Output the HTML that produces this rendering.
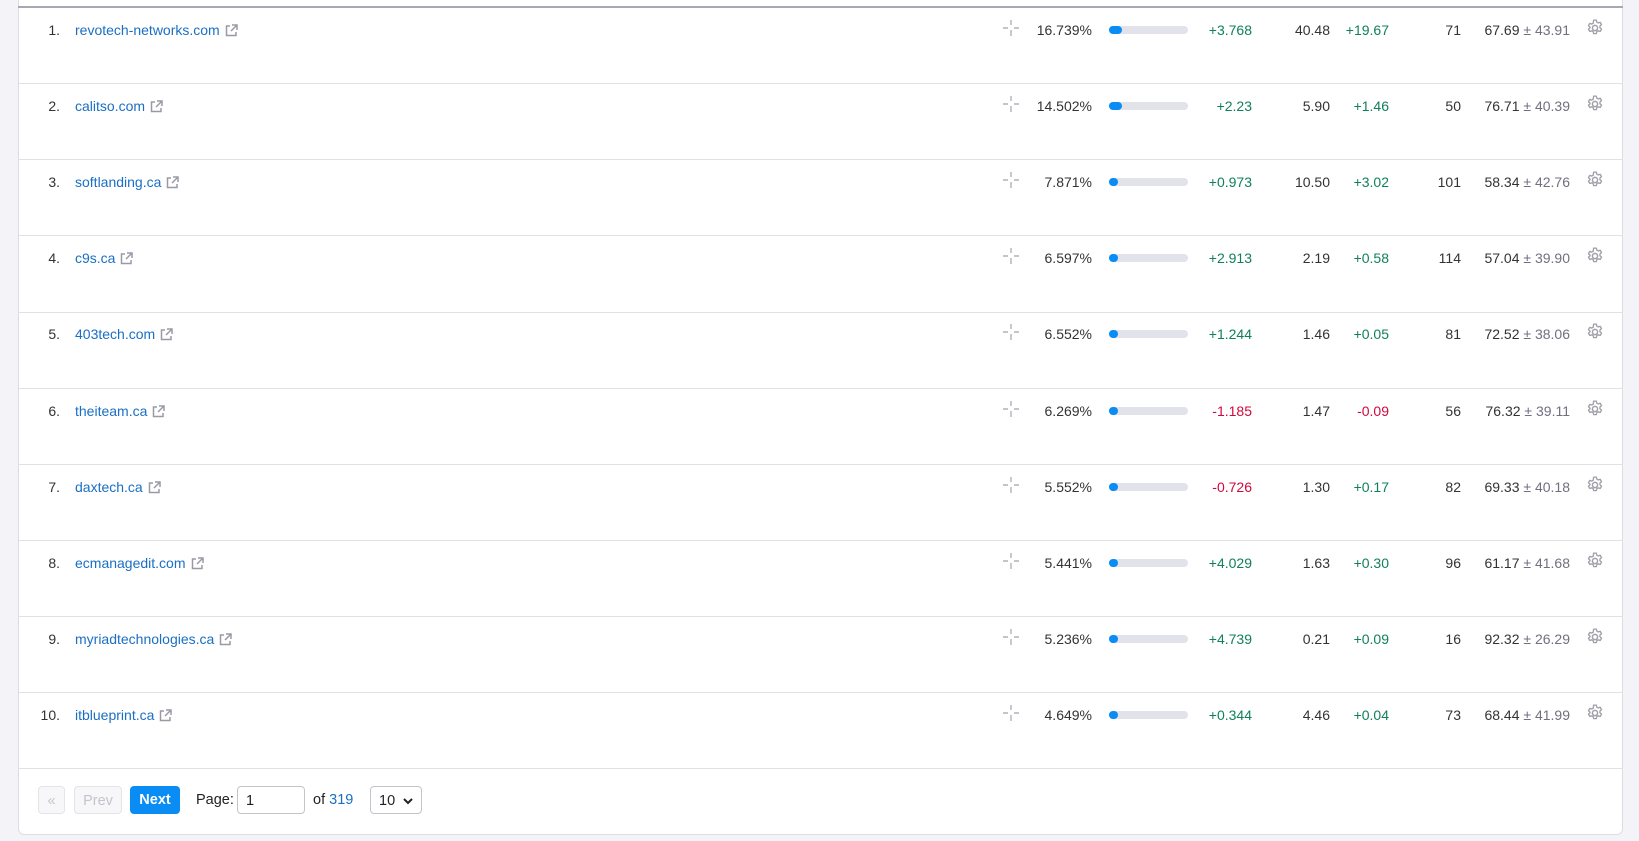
<!DOCTYPE html>
<html><head><meta charset="utf-8"><style>
*{box-sizing:border-box;margin:0;padding:0}
body{width:1639px;height:841px;background:#f4f4f8;font-family:"Liberation Sans",Arial,sans-serif;font-size:14px;color:#333;position:relative;overflow:hidden}
.card{position:absolute;left:18px;top:-10px;width:1605px;height:845px;background:#fff;border:1px solid #dcdce2;border-radius:0 0 6px 6px}
.topline{position:absolute;left:18px;top:6px;width:1605px;height:2px;background:#a8a8b0}
.row{position:absolute;left:18px;width:1605px;height:76.3px;border-bottom:1px solid #e0e0e5}
.row span{position:absolute;top:14px;white-space:nowrap}
.n{right:1563px;color:#333}
.d{left:57px;color:#1a6fc4}
.ext{display:inline-block;vertical-align:-2px;margin-left:5px}
.ch{left:985px;top:12px!important}
.p{right:531px}
.bar{left:1091px;top:18px!important;width:79px;height:8px;background:#e2e2ea;border-radius:4px}
.bar i{position:absolute;left:0;top:0;height:8px;background:#0a8cf5;border-radius:4px}
.dl{right:371px}
.v{right:293px}
.d2{right:234px}
.c{right:162px}
.s{right:53px}
.s em{font-style:normal;color:#707080}
.g{left:1568px;top:11px!important}
.gr{color:#11805a}.rd{color:#d1083e}
.pg{position:absolute;top:786px;height:28px;border-radius:4px;font-size:14.5px;line-height:28px;text-align:center}
</style></head><body>
<div class="card"></div>
<div class="topline"></div>
<div id="rows"></div>
<div class="pg" style="left:38px;width:27px;border:1px solid #e4e4e8;background:#f7f7f9;color:#c4c4cc">«</div>
<div class="pg" style="left:74px;width:48px;border:1px solid #e4e4e8;background:#f7f7f9;color:#c4c4cc">Prev</div>
<div class="pg" style="left:130px;width:50px;background:#0a8cf5;color:#fff;font-weight:bold">Next</div>
<div class="pg" style="left:196px;color:#222">Page:</div>
<div class="pg" style="left:237px;width:68px;border:1px solid #c4c4cc;text-align:left;padding-left:8px;color:#222">1</div>
<div class="pg" style="left:313px;color:#222">of <span style="color:#1a6fc4">319</span></div>
<div class="pg" style="left:370px;width:52px;border:1px solid #c4c4cc;text-align:left;padding-left:8px;color:#222">10 <svg width="10" height="8" style="vertical-align:0;margin-left:4px" viewBox="0 0 10 8"><path d="M1 2l4 4 4-4" stroke="#222" stroke-width="2" fill="none"/></svg></div>
<script>
var data=[["revotech-networks.com","16.739%",13,"+3.768","40.48","+19.67","71","67.69","43.91"],
["calitso.com","14.502%",13,"+2.23","5.90","+1.46","50","76.71","40.39"],
["softlanding.ca","7.871%",9,"+0.973","10.50","+3.02","101","58.34","42.76"],
["c9s.ca","6.597%",9,"+2.913","2.19","+0.58","114","57.04","39.90"],
["403tech.com","6.552%",9,"+1.244","1.46","+0.05","81","72.52","38.06"],
["theiteam.ca","6.269%",9,"-1.185","1.47","-0.09","56","76.32","39.11"],
["daxtech.ca","5.552%",9,"-0.726","1.30","+0.17","82","69.33","40.18"],
["ecmanagedit.com","5.441%",9,"+4.029","1.63","+0.30","96","61.17","41.68"],
["myriadtechnologies.ca","5.236%",9,"+4.739","0.21","+0.09","16","92.32","26.29"],
["itblueprint.ca","4.649%",9,"+0.344","4.46","+0.04","73","68.44","41.99"]];
var ext='<svg class="ext" width="13" height="13" viewBox="0 0 13 13"><path d="M5 2H1.5v9.5H11V8M7 1h5v5M12 1L6 7" stroke="#9a9aa6" stroke-width="1.5" fill="none"/></svg>';
var ch='<svg width="16" height="16" viewBox="0 0 16 16"><path d="M8 0v5M8 10v6M0 8h5M11 8h5" stroke="#b0b0b8" stroke-width="1.4"/></svg>';
var gear='<svg width="18" height="18" viewBox="0 0 16 16"><circle cx="8" cy="8" r="2.3" stroke="#a0a0aa" stroke-width="1.3" fill="none"/><path d="M6.8 1h2.4l.4 1.8 1.3.7 1.7-.6 1.2 2.1-1.4 1.2v1.6l1.4 1.2-1.2 2.1-1.7-.6-1.3.7-.4 1.8H6.8l-.4-1.8-1.3-.7-1.7.6-1.2-2.1 1.4-1.2V7.2L2.2 6l1.2-2.1 1.7.6 1.3-.7z" stroke="#a0a0aa" stroke-width="1.2" fill="none" stroke-linejoin="round"/></svg>';
var h='';
data.forEach(function(r,i){
var top=8+i*76.1;
function cl(v){return v[0]=='-'?'rd':'gr'}
h+='<div class="row" style="top:'+top+'px"><span class="n">'+(i+1)+'.</span><span class="d">'+r[0]+ext+'</span><span class="ch">'+ch+'</span><span class="p">'+r[1]+'</span><span class="bar"><i style="width:'+r[2]+'px"></i></span><span class="dl '+cl(r[3])+'">'+r[3]+'</span><span class="v">'+r[4]+'</span><span class="d2 '+cl(r[5])+'">'+r[5]+'</span><span class="c">'+r[6]+'</span><span class="s">'+r[7]+' <em>± '+r[8]+'</em></span><span class="g">'+gear+'</span></div>';
});
document.getElementById('rows').innerHTML=h;
</script>
</body></html>
